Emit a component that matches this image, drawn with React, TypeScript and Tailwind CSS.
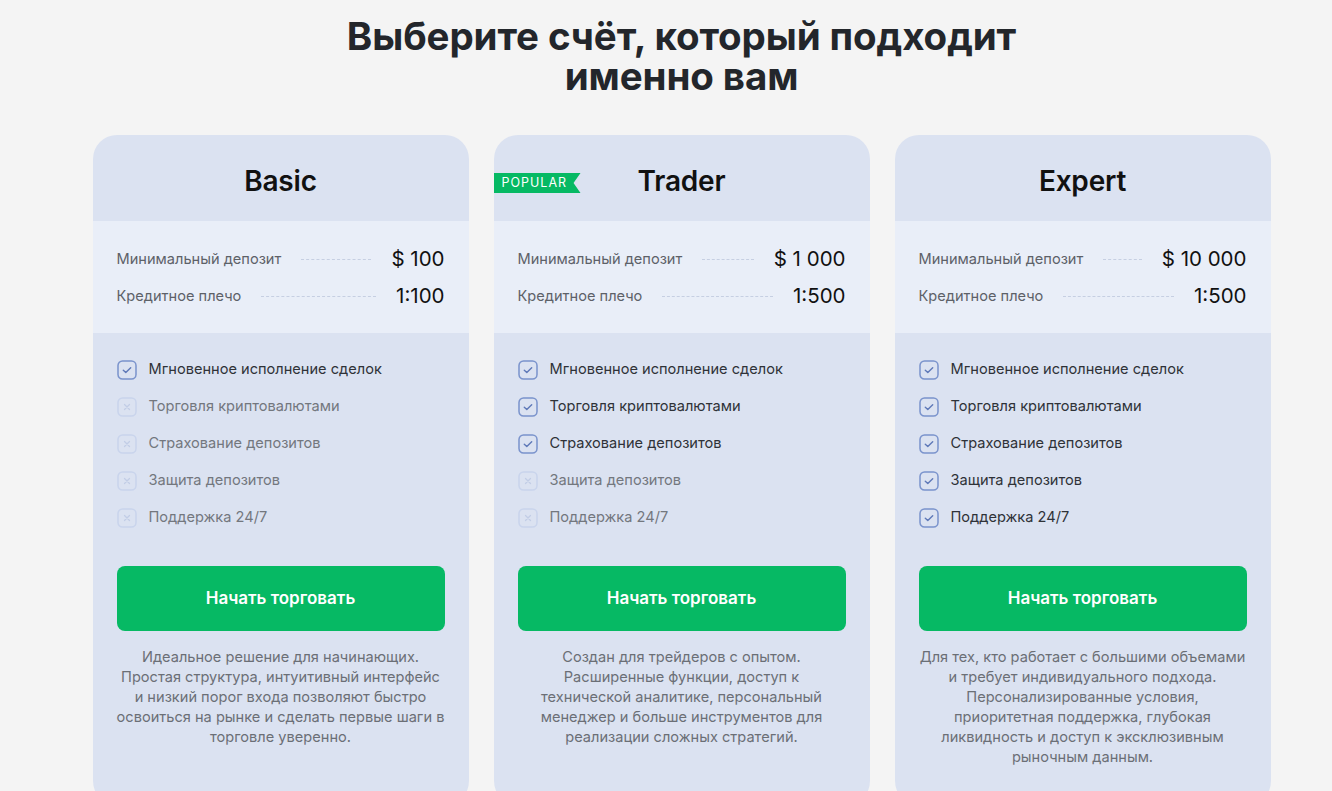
import React from "react";

type Plan = {
  name: string;
  deposit: string;
  leverage: string;
  features: boolean[];
  text: string[];
  popular?: boolean;
};

const FEATURES = [
  "Мгновенное исполнение сделок",
  "Торговля криптовалютами",
  "Страхование депозитов",
  "Защита депозитов",
  "Поддержка 24/7",
];

const PLANS: Plan[] = [
  {
    name: "Basic",
    deposit: "$ 100",
    leverage: "1:100",
    features: [true, false, false, false, false],
    text: [
      "Идеальное решение для начинающих.",
      "Простая структура, интуитивный интерфейс",
      "и низкий порог входа позволяют быстро",
      "освоиться на рынке и сделать первые шаги в",
      "торговле уверенно.",
    ],
  },
  {
    name: "Trader",
    deposit: "$ 1 000",
    leverage: "1:500",
    popular: true,
    features: [true, true, true, false, false],
    text: [
      "Создан для трейдеров с опытом.",
      "Расширенные функции, доступ к",
      "технической аналитике, персональный",
      "менеджер и больше инструментов для",
      "реализации сложных стратегий.",
    ],
  },
  {
    name: "Expert",
    deposit: "$ 10 000",
    leverage: "1:500",
    features: [true, true, true, true, true],
    text: [
      "Для тех, кто работает с большими объемами",
      "и требует индивидуального подхода.",
      "Персонализированные условия,",
      "приоритетная поддержка, глубокая",
      "ликвидность и доступ к эксклюзивным",
      "рыночным данным.",
    ],
  },
];

function CheckBox({ on }: { on: boolean }) {
  if (on) {
    return (
      <svg width="20" height="20" viewBox="0 0 20 20" className="shrink-0">
        <rect x="1" y="1" width="18" height="18" rx="4.5" fill="none" stroke="#7a93cc" strokeWidth="1.5" />
        <path d="M6.3 10.2l2.5 2.4 4.9-4.9" fill="none" stroke="#5f79b8" strokeWidth="1.4" strokeLinecap="round" strokeLinejoin="round" />
      </svg>
    );
  }
  return (
    <svg width="20" height="20" viewBox="0 0 20 20" className="shrink-0">
      <rect x="1" y="1" width="18" height="18" rx="4.5" fill="none" stroke="#c9d4ec" strokeWidth="1.5" />
      <path d="M7.5 7.5l5 5M12.5 7.5l-5 5" fill="none" stroke="#c2cde6" strokeWidth="1.3" strokeLinecap="round" />
    </svg>
  );
}

function StatRow({ label, value }: { label: string; value: string }) {
  return (
    <div className="flex items-center h-[37px]">
      <span className="text-[14.6px] text-[#5d6168]">{label}</span>
      <span className="flex-1 mx-5 border-t border-dashed border-[#c6cfe2]" />
      <span className="text-[20.5px] text-[#111] font-normal">{value}</span>
    </div>
  );
}

function Card({ plan }: { plan: Plan }) {
  return (
    <div className="w-[376px] h-[670px] rounded-[24px] bg-[#dbe2f1] overflow-hidden flex flex-col">
      <div className="relative h-[86px] pt-[6px] flex items-center justify-center">
        {plan.popular && (
          <div
            className="absolute left-0 top-[38px] h-[20px] w-[87px] bg-[#06b964] flex items-center pl-[8px] text-white text-[12.5px] tracking-[1px]"
            style={{ clipPath: "polygon(0 0, 100% 0, 92% 50%, 100% 100%, 0 100%)" }}
          >
            POPULAR
          </div>
        )}
        <h2 className="text-[28px] font-semibold text-[#111] tracking-[-0.2px]">{plan.name}</h2>
      </div>
      <div className="bg-[#e9eef8] px-6 pt-[20px] pb-[18px]">
        <StatRow label="Минимальный депозит" value={plan.deposit} />
        <StatRow label="Кредитное плечо" value={plan.leverage} />
      </div>
      <ul className="px-6 pt-[18px] flex flex-col">
        {FEATURES.map((f, i) => (
          <li key={f} className="flex items-center gap-[12px] h-[37px]">
            <CheckBox on={plan.features[i]} />
            <span className={`text-[14.6px] ${plan.features[i] ? "text-[#2f3238]" : "text-[#73777e]"}`}>{f}</span>
          </li>
        ))}
      </ul>
      <div className="px-6 pt-[30px]">
        <button className="w-full h-[65px] rounded-[8px] bg-[#06b964] text-white text-[17px] font-semibold">
          Начать торговать
        </button>
      </div>
      <p className="px-4 pt-[16px] text-center text-[14.6px] leading-[20px] text-[#6b6f76]">
        {plan.text.map((l) => (
          <span key={l} className="block whitespace-nowrap">{l}</span>
        ))}
      </p>
    </div>
  );
}

export default function App() {
  return (
    <div className="min-h-screen bg-[#f4f4f4] overflow-hidden pl-[31px]" style={{ fontFamily: "Inter, 'Noto Sans', sans-serif" }}>
      <h1 className="pt-[16px] flex flex-col items-center text-[38.5px] leading-[40px] font-bold text-[#23262b] tracking-[-0.1px]">
        <span className="block h-[40px]">Выберите счёт, который подходит</span>
        <span className="block h-[40px]">именно вам</span>
      </h1>
      <div className="mt-[39px] flex justify-center gap-[25px]">
        {PLANS.map((p) => (
          <Card key={p.name} plan={p} />
        ))}
      </div>
    </div>
  );
}
